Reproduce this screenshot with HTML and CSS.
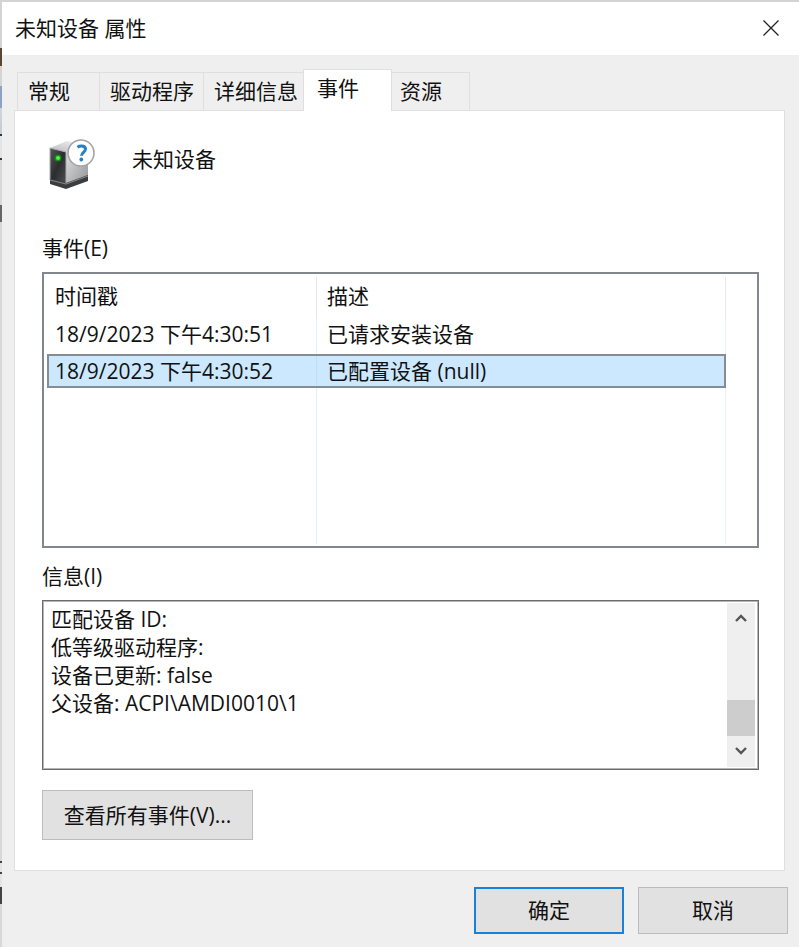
FILE: index.html
```html
<!DOCTYPE html>
<html lang="zh-CN">
<head>
	<meta charset="UTF-8">
	<meta name="viewport" content="width=device-width, initial-scale=1">
	<title>未知设备 属性</title>
	<link rel="stylesheet" href="styles.css">
</head>
<body>
	<div class="dialog">
		<header class="title-bar">
			<h1 class="title">未知设备 属性</h1>
			<button class="close" type="button" aria-label="关闭">
				<svg width="18" height="18" viewBox="0 0 18 18" fill="none" stroke="#222" stroke-width="1.3">
					<path d="M1.5 1.5l15 15M16.5 1.5l-15 15"/>
				</svg>
			</button>
		</header>

		<nav class="tabs" role="tablist">
			<button class="tab" type="button" role="tab">常规</button>
			<button class="tab tab-driver" type="button" role="tab">驱动程序</button>
			<button class="tab tab-details" type="button" role="tab">详细信息</button>
			<button class="tab tab-active" type="button" role="tab" aria-selected="true">事件</button>
			<button class="tab tab-resources" type="button" role="tab">资源</button>
		</nav>

		<main class="panel">
			<div class="device">
				<svg class="device-icon" width="48" height="52" viewBox="0 0 48 52">
					<defs>
						<linearGradient id="side" x1="0" y1="0" x2="1" y2="1">
							<stop offset="0" stop-color="#e8e8ea"/>
							<stop offset="1" stop-color="#929497"/>
						</linearGradient>
						<linearGradient id="front" x1="0" y1="0" x2="1" y2="1">
							<stop offset="0" stop-color="#555759"/>
							<stop offset="0.5" stop-color="#2c2d2f"/>
							<stop offset="1" stop-color="#505254"/>
						</linearGradient>
						<linearGradient id="top" x1="0" y1="1" x2="1" y2="0">
							<stop offset="0" stop-color="#b9bbbe"/>
							<stop offset="1" stop-color="#f8f8f8"/>
						</linearGradient>
					</defs>
					<path d="M2 11L19 4l22 5-23 6z" fill="url(#top)"/>
					<path d="M17 15l23-7v32L17 48z" fill="url(#side)"/>
					<path d="M2 11l16 4v33L2 43z" fill="url(#front)" stroke="#aaacae" stroke-width="1"/>
					<path d="M2 42l16 4 22-8v6l-22 8L2 47z" fill="#3b3c3e"/>
					<path d="M2 43l16 4 22-8" fill="none" stroke="#888a8c" stroke-width="1"/>
					<circle cx="10" cy="21" r="3.5" fill="#148c17"/>
					<circle cx="10" cy="21" r="2" fill="#48fa42"/>
					<circle cx="33" cy="16" r="13" fill="#fff" stroke="#a3a5a7" stroke-width="1.6"/>
					<path d="M29.5 10.2c1.1-.8 2.5-1.2 4-1.2 2.4 0 4 1.1 4 3.1 0 3.2-4 3.3-4 6.7" fill="none" stroke="#2680c6" stroke-width="3"/>
					<circle cx="33.3" cy="22.5" r="1.9" fill="#2680c6"/>
				</svg>
				<span>未知设备</span>
			</div>

			<h2 class="label" id="events-label">事件(E)</h2>
			<div class="event-list">
				<table class="events" aria-labelledby="events-label">
					<thead>
						<tr><th class="time">时间戳</th><th>描述</th></tr>
					</thead>
					<tbody>
						<tr><td>18/9/2023 下午4:30:51</td><td>已请求安装设备</td></tr>
						<tr class="selected"><td>18/9/2023 下午4:30:52</td><td>已配置设备 (null)</td></tr>
						<tr class="empty"><td></td><td></td></tr>
					</tbody>
				</table>
			</div>

			<label class="label label-info" for="info">信息(I)</label>
			<div class="info-box">
				<textarea class="info" id="info" rows="5" readonly>匹配设备 ID:
低等级驱动程序:
设备已更新: false
父设备: ACPI\AMDI0010\1</textarea>
				<div class="scrollbar">
					<button class="scroll-button" type="button" aria-label="向上滚动">
						<svg width="12" height="8" viewBox="0 0 12 8" fill="none" stroke="#555" stroke-width="2.4"><path d="M1 7l5-5 5 5"/></svg>
					</button>
					<div class="scroll-thumb"></div>
					<button class="scroll-button" type="button" aria-label="向下滚动">
						<svg width="12" height="8" viewBox="0 0 12 8" fill="none" stroke="#555" stroke-width="2.4"><path d="M1 1l5 5 5-5"/></svg>
					</button>
				</div>
			</div>

			<button class="button button-view" type="button">查看所有事件(V)...</button>
		</main>

		<footer class="actions">
			<button class="button button-default" type="button">确定</button>
			<button class="button" type="button">取消</button>
		</footer>
	</div>
</body>
</html>
```
FILE: styles.css
```css
* {
	box-sizing: border-box;
}

body {
	margin: 0;
	padding: 2px 0 0 2px;
	min-height: 100vh;
	display: flex;
	/* sliver of the window behind the dialog */
	background: linear-gradient(#d4d4d4 48px, #5b4630 48px, #5b4630 66px, #d4d4d4 66px, #d4d4d4 86px, #8ba3c4 86px, #8ba3c4 108px, #d4d4d4 108px, #c3cbd9 134px, #333 134px, #333 136px, #e4e4e4 136px, #e4e4e4 158px, #333 158px, #333 160px, #d8d8d8 160px, #d8d8d8 205px, #666 205px, #666 222px, #d8d8d8 222px, #d8d8d8 861px, #444 861px, #444 863px, #e4e4e4 863px, #e4e4e4 872px, #444 872px, #444 874px, #e4e4e4 874px, #e4e4e4 887px, #444 887px, #444 904px, #d8d8d8 904px);
	color: #111;
	font-family: "Open Sans", "Noto Sans CJK SC", sans-serif;
	font-size: 21px;
	line-height: 28px;
}

button,
textarea {
	font: inherit;
	color: inherit;
}

.dialog {
	flex: 1;
	min-width: 0;
	background: #efefef;
}

.title-bar {
	display: flex;
	align-items: center;
	justify-content: space-between;
	height: 53px;
	padding: 0 13px 2px;
	background: #fff;
}

.title {
	margin: 0;
	font-size: 21px;
	font-weight: normal;
}

.close {
	display: flex;
	padding: 6px;
	border: 0;
	background: none;
}

/* Tabs */
.tabs {
	display: flex;
	align-items: flex-end;
	padding: 14px 14px 0 15px;
}

.tab {
	width: 83px;
	height: 38px;
	padding: 0 10px 2px;
	border: 1px solid #dfdfdf;
	border-left-width: 0;
	border-bottom: 0;
	background: #efefef;
	text-align: left;
	white-space: nowrap;
}

.tab:first-child {
	border-left-width: 1px;
}

.tab-driver {
	width: 104px;
}

.tab-details {
	width: 99px;
	border-right: 0;
}

.tab-active {
	width: 89px;
	height: 42px;
	margin-bottom: -1px;
	padding: 0 13px 6px;
	border-left-width: 1px;
	background: #fff;
	z-index: 1;
}

.tab-resources {
	width: 78px;
	padding: 0 8px 2px;
}

/* Panel */
.panel {
	margin: 0 14px 0 12px;
	padding: 26px 25px 30px 27px;
	border: 1px solid #dfdfdf;
	background: #fff;
}

.device {
	display: flex;
	gap: 36px;
	padding-left: 6px;
}

.device span {
	padding-top: 8px;
}

.label {
	display: block;
	margin: 45px 0 10px;
	font-size: 21px;
	font-weight: normal;
}

.label-info {
	margin: 14px 0 10px;
}

.event-list {
	height: 276px;
	padding: 3px 31px 2px 3px;
	border: 2px solid #82868f;
}

.events {
	width: 100%;
	border-collapse: separate;
	border-spacing: 0;
	table-layout: fixed;
}

.events th,
.events td {
	height: 36px;
	padding: 0 8px 4px 10px;
	border-right: 1px solid #e3f0fb;
	font-weight: normal;
	text-align: left;
	white-space: nowrap;
}

.events td:first-child,
.events th:first-child {
	padding-left: 8px;
}

.events th {
	height: 41px;
	border-color: #e8e8e8;
}

.events .time {
	width: 270px;
}

.events .selected td {
	height: 34px;
	padding-bottom: 0;
	background: #cce8ff;
	border-right-color: #bfdff8;
}

.selected {
	outline: 2px solid #858c94;
	outline-offset: -2px;
}

.events .empty td {
	height: 156px;
}

.info-box {
	display: flex;
	padding: 2px;
	border: 1px solid #6b6b6b;
	outline: 1px solid #b5b5b5;
	outline-offset: -2px;
}

.info {
	flex: 1;
	min-width: 0;
	height: 164px;
	padding: 2px 6px;
	border: 0;
	outline: 0;
	background: #fff;
	resize: none;
	overflow: hidden;
}

.scrollbar {
	display: flex;
	flex-direction: column;
	width: 28px;
	margin-right: 1px;
	padding-bottom: 2px;
	background: #efefef;
}

.scroll-button {
	display: flex;
	align-items: center;
	justify-content: center;
	height: 29px;
	padding: 0;
	border: 0;
	background: none;
}

.scroll-thumb {
	height: 36px;
	margin-top: auto;
	background: #cdcdcd;
}

/* Buttons */
.button {
	width: 150px;
	height: 47px;
	padding: 0 0 2px;
	border: 1px solid #bcbcbc;
	background: #e1e1e1;
}

.button-default {
	border: 2px solid #1683d8;
}

.button-view {
	display: block;
	width: 211px;
	height: 50px;
	padding: 0;
	margin-top: 20px;
}

.actions {
	display: flex;
	justify-content: flex-end;
	gap: 14px;
	padding: 16px 11px 13px;
}
```
